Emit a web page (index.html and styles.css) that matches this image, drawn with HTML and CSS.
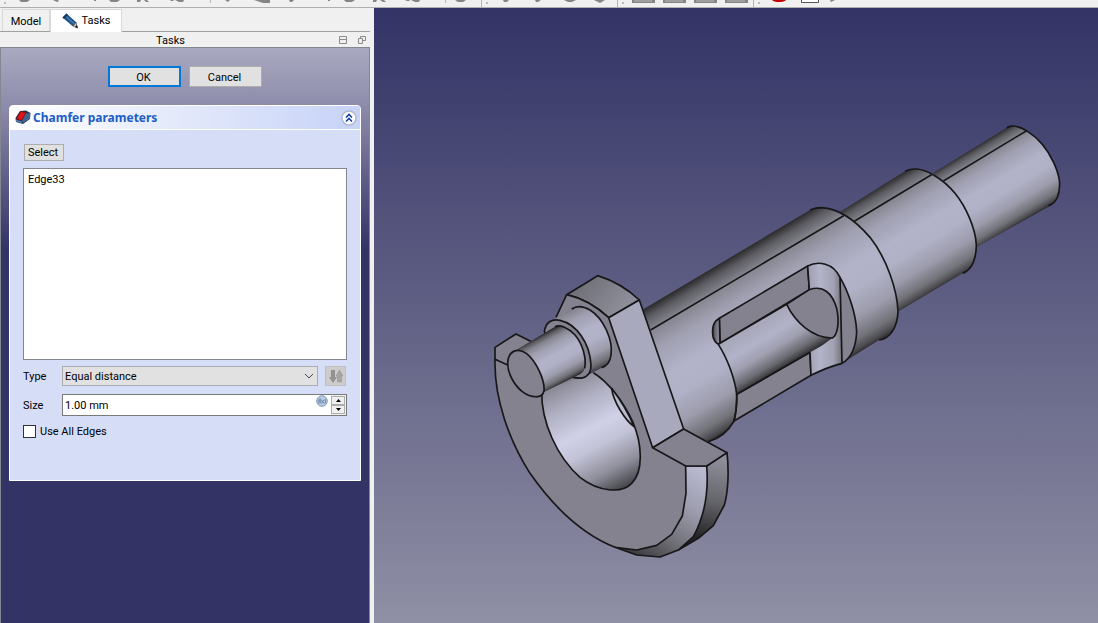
FILE: index.html
```html
<!DOCTYPE html>
<html lang="en">
<head>
<meta charset="utf-8">
<title>Chamfer parameters</title>
<link rel="stylesheet" href="styles.css">
</head>
<body>
<div class="app">
  <header class="toolbar" aria-label="Toolbar">
    <svg class="toolbar-art" viewBox="0 0 1098 7" preserveAspectRatio="xMinYMin slice" aria-hidden="true">
      <g fill="#858585">
        <path d="M19 0h11l-3 2h-6zM53 0h5l1 1-2 1zM96 0v1h-2V0zM109 0h11l-3 2h-6zM137 0h4l-1 2h-3zM144 0h3l2 2h-3zM170 0h4l-1 1h-2zM175 0h9l-1 2h-4zM225 0h5l-2 2zM254 0h16v3h-7zM289 0h5l-2 2h-2zM330 0v1h-2V0zM344 0h11l-3 2h-6zM373 0h4l-1 2h-3zM380 0h4l2 2h-3zM405 0h5l-1 1h-2zM411 0h9l-1 2h-4zM455 0h11l-3 2h-5zM503 0h6l-2 2h-3zM535 0h6l-3 2h-2zM564 0h12l-4 2h-4zM594 0h11l-5 3z"/>
        <path d="M632 0h23v3h-23zM663 0h23v3h-23zM694 0h23v3h-23zM725 0h23v3h-23z"/>
        <path d="M830 0h5l-4 2z"/>
      </g>
      <path d="M634 1h18M665 1h18M696 1h18M727 1h18" stroke="#b9b9b9"/>
      <path d="M772 0h14q-2 2-7 2t-7-2z" fill="#c40000"/>
      <path d="M801.500 0v2.500h17V0" fill="#fff" stroke="#555"/>
      <path d="M210.500 0v3M445.500 0v3M481.500 0v7M617.500 0v7M753.500 0v7" stroke="#b4b4b4"/>
      <path d="M4 2h2v2H4zM486 2h2v2h-2zM622 2h2v2h-2zM758 2h2v2h-2z" fill="#bdbdbd"/>
    </svg>
  </header>
  <div class="workspace">
    <aside class="dock">
      <nav class="tabs" role="tablist">
        <button class="tab" role="tab" aria-selected="false">Model</button>
        <button class="tab tab-active" role="tab" aria-selected="true">
          <svg class="pencil" viewBox="0 0 16 16" aria-hidden="true">
            <path d="M.5 4.500 4.500.5 14.500 9.500 11 13.500z" fill="#245487"/>
            <path d="M3.500 3 12.500 11" stroke="#4580b5" stroke-width="1.300"/>
            <path d="M.5 4.500 4.500.5l1.500 1.500L2 6z" fill="#173a60"/>
            <path d="M11 13 14 9.500 15.500 15z" fill="#c9c5bb" stroke="#333" stroke-width=".6"/>
            <path d="m13 14 2-2 .7 3.300z" fill="#111"/>
          </svg>
          Tasks
        </button>
      </nav>
      <div class="dock-title">
        <span class="dock-name">Tasks</span>
        <button class="dock-btn" aria-label="Shade"><svg viewBox="0 0 10 10"><path d="M1.500 1.500h7v7h-7zM1 4.500h8" fill="none" stroke="#8b8b8b"/></svg></button>
        <button class="dock-btn" aria-label="Float"><svg viewBox="0 0 10 10"><path d="M3.500 3V1.500h5v4H6M1.500 3.500h4v5h-4z" fill="none" stroke="#8b8b8b"/></svg></button>
      </div>
      <div class="task-view">
        <div class="actions">
          <button class="btn btn-default">OK</button>
          <button class="btn">Cancel</button>
        </div>
        <section class="card">
          <div class="card-head">
            <svg class="chamfer-icon" viewBox="0 0 16 15" aria-hidden="true">
              <path d="M5 1 11 .5 15.500 3 15 9 8 14 1 12 .5 8z" fill="#1d3656"/>
              <path d="m10 3.500 5-.5v5.500L8.500 13 6 9.500z" fill="#3d6590"/>
              <path d="M.8 9.500 7 11.500v1.800L1 11.500z" fill="#4f7fb0"/>
              <path d="M5.500 1.500 11 2.500 6.500 10.500 1.500 9z" fill="#e21414" stroke="#7c0c12" stroke-width=".8"/>
            </svg>
            <h1 class="card-title">Chamfer parameters</h1>
            <button class="collapse" aria-label="Collapse">
              <svg viewBox="0 0 16 16"><circle cx="8" cy="8" r="7" fill="#fff" stroke="#b1b8d3" stroke-width="1.500"/><path d="M5 7.500 8 4.500l3 3M5 11.500l3-3 3 3" fill="none" stroke="#1740a0" stroke-width="1.600"/></svg>
            </button>
          </div>
          <div class="card-body">
            <button class="btn-select">Select</button>
            <ul class="edge-list"><li>Edge33</li></ul>
            <div class="row row-type">
              <label for="type">Type</label>
              <div class="combo">
                <select id="type"><option>Equal distance</option></select>
                <svg class="chevron" viewBox="0 0 10 6"><path d="m1 1 4 4 4-4" fill="none" stroke="#444"/></svg>
              </div>
              <button class="flip" aria-label="Flip direction" disabled>
                <svg viewBox="0 0 16 15"><path d="M3 1h4v7h2l-4 6-4-6h2z" fill="#929292"/><path d="M9.500 13V7H8l3.500-6L15 7h-1.500v6z" fill="#a5a5a5" stroke="#979797" stroke-width=".6"/></svg>
              </button>
            </div>
            <div class="row row-size">
              <label for="size">Size</label>
              <div class="spin">
                <input id="size" type="text" value="1.00 mm">
                <svg class="fx" viewBox="0 0 12 12" aria-hidden="true"><circle cx="6" cy="6" r="5.300" fill="#b9cbe0" stroke="#7f9dbc"/><path d="M3 9V5q0-1.500 1.500-1.500M2 6h2M5 4q-1 2 0 4.500M5.500 5l2.500 3.500M8 5l-2.500 3.500M9 4q1 2 0 4.500" fill="none" stroke="#6686a8" stroke-width=".9"/></svg>
                <span class="steps">
                  <button aria-label="Increase"><svg viewBox="0 0 5 3"><path d="M0 3 2.500 0 5 3z"/></svg></button>
                  <button aria-label="Decrease"><svg viewBox="0 0 5 3"><path d="M0 0 2.500 3 5 0z"/></svg></button>
                </span>
              </div>
            </div>
            <label class="check"><input type="checkbox"><span>Use All Edges</span></label>
          </div>
        </section>
      </div>
    </aside>
    <main class="viewport">
      <svg class="model" viewBox="1122 24 2172 1845" preserveAspectRatio="xMidYMid meet" role="img" aria-label="Shaft part">
        <defs>
          <linearGradient id="shade">
            <stop offset="0" stop-color="#2c2c2e"/><stop offset=".06" stop-color="#5c5c62"/><stop offset=".15" stop-color="#878792"/><stop offset=".28" stop-color="#a1a1b3"/><stop offset=".46" stop-color="#b2b2c9"/><stop offset=".62" stop-color="#b0b0c6"/><stop offset=".78" stop-color="#9c9cac"/><stop offset=".91" stop-color="#727279"/><stop offset=".97" stop-color="#4b4b50"/><stop offset="1" stop-color="#2d2d2f"/>
          </linearGradient>
          <linearGradient id="c3" href="#shade" gradientUnits="userSpaceOnUse" x1="560" y1="53" x2="697" y2="282"/>
          <linearGradient id="c2" href="#shade" gradientUnits="userSpaceOnUse" x1="255" y1="184" x2="437" y2="488"/>
          <linearGradient id="c1" href="#shade" gradientUnits="userSpaceOnUse" x1="510" y1="60" x2="738" y2="441"/>
          <linearGradient id="inner" gradientUnits="userSpaceOnUse" x1="235" y1="463" x2="317" y2="600">
            <stop offset="0" stop-color="#a6a6b8"/><stop offset=".35" stop-color="#b2b2c9"/><stop offset=".6" stop-color="#a0a0b1"/><stop offset=".85" stop-color="#6b6b73"/><stop offset="1" stop-color="#333336"/>
          </linearGradient>
          <linearGradient id="endwall" gradientUnits="userSpaceOnUse" x1="503" y1="0" x2="606" y2="0">
            <stop offset="0" stop-color="#9d9dae"/><stop offset=".35" stop-color="#b3b3ca"/><stop offset=".75" stop-color="#a2a2b4"/><stop offset="1" stop-color="#73737c"/>
          </linearGradient>
          <linearGradient id="nook" gradientUnits="userSpaceOnUse" x1="217" y1="0" x2="241" y2="0">
            <stop offset="0" stop-color="#444448"/><stop offset="1" stop-color="#a0a0b0"/>
          </linearGradient>
          <linearGradient id="cap" gradientUnits="userSpaceOnUse" x1="310" y1="60" x2="420" y2="150">
            <stop offset="0" stop-color="#707078"/><stop offset="1" stop-color="#8d8d99"/>
          </linearGradient>
          <linearGradient id="bore" gradientUnits="userSpaceOnUse" x1="270" y1="365" x2="440" y2="690">
            <stop offset="0" stop-color="#8d8d9a"/><stop offset=".18" stop-color="#b0b0c3"/><stop offset=".42" stop-color="#d0d0e7"/><stop offset=".58" stop-color="#c2c2d7"/><stop offset=".8" stop-color="#8d8d9a"/><stop offset="1" stop-color="#3a3a3d"/>
          </linearGradient>
          <linearGradient id="pin" href="#shade" gradientUnits="userSpaceOnUse" x1="115" y1="262" x2="189" y2="400"/>
          <linearGradient id="boss" href="#shade" gradientUnits="userSpaceOnUse" x1="255" y1="125" x2="358" y2="330"/>
          <linearGradient id="bevel" gradientUnits="userSpaceOnUse" x1="650" y1="618" x2="480" y2="890">
            <stop offset="0" stop-color="#b9b9d0"/><stop offset=".35" stop-color="#9e9eb0"/><stop offset=".7" stop-color="#73737b"/><stop offset="1" stop-color="#3e3e42"/>
          </linearGradient>
          <linearGradient id="rim" gradientUnits="userSpaceOnUse" x1="715" y1="600" x2="665" y2="840">
            <stop offset="0" stop-color="#8d8d99"/><stop offset=".5" stop-color="#65656c"/><stop offset="1" stop-color="#222224"/>
          </linearGradient>
        </defs>
        <g class="ink" transform="translate(2460 330)">
          <path class="bare" fill="url(#c3)" d="M340 188 560 53 580 48 600 51 620 62 650 85 680 118 705 165 718 210V240L710 265 698 282 685 290 469 412z"/>
          <path d="M560 53Q572 47 580 48C605 49 640 72 667 103 695 136 714 182 718 210 722 250 710 280 685 287M370 213 620 62"/>
          <path class="bare" fill="url(#c2)" d="M60 305 255 184 285 177 310 180 338 192 370 213 405 250 435 295 458 350 469 405 465 440 455 465 440 484 428 490 236 604z"/>
          <path d="M255 184Q272 176 290 177C320 179 370 206 405 250 440 293 467 358 469 405 468 452 452 481 428 490M103 334 338 192"/>
        </g>
        <g class="ink" transform="translate(1920 570)">
          <path class="bare" fill="url(#c1)" d="M10 358 510 60 545 53 575 60 611 77 643 95 680 130 720 185 750 245 770 310 774 365 768 400 755 425 735 443 717 450 606 520Q560 532 513 556L282 693C265 720 240 745 205 755L130 716 0 330z"/>
          <path d="M510 60Q528 53 545 53C600 55 650 96 690 142 740 205 772 300 774 365 772 412 750 446 717 450M32 420 611 77"/>
          <path class="face" d="M238 385 503 228 508 299 240 460z"/>
          <path fill="url(#nook)" d="M238 385C222 394 215 415 219 440Q223 455 235 463L240 460z"/>
          <path class="face" d="M290 613 510 487 513 556 282 693Q292 655 290 613z"/>
          <path class="bare" fill="url(#endwall)" d="M503 228C535 211 580 220 600 262L606 520Q560 532 513 556L510 487Q540 473 577 444L585 400 580 320 508 299z"/>
          <path d="M508 299 503 228C535 211 580 220 600 262M606 520Q560 532 513 556L510 487"/>
          <path class="face" d="M600 262C625 305 648 370 650 425 648 470 635 503 606 520z"/>
          <path class="bare" fill="url(#inner)" d="M235 463 440 343C465 390 515 440 577 444Q545 470 510 487L290 613C286 570 260 500 235 463z"/>
          <path class="face" d="M440 343 508 299C550 284 577 310 590 355 599 395 593 435 577 444 515 443 465 395 440 343z"/>
          <path d="M235 463 440 343M290 613 510 487M235 463C265 510 285 570 290 613Q291 660 282 693C265 723 240 745 205 755"/>
        </g>
        <g class="ink" transform="translate(1440 780)">
          <path fill="url(#cap)" d="M260 104 353 47C398 61 440 84 478 120L386 173C350 140 310 115 260 104z"/>
          <path fill="url(#rim)" d="M680 618 741 578C747 630 745 695 733 735L700 797 655 835 595 870 500 860z"/>
          <path class="face" d="M45 262 108 222 170 253 100 330 45 298z"/>
          <path class="face bare" d="M45 298 83 315 200 300 228 172 260 104C310 115 350 140 386 173L518 563 617 618 618 700 607 768 575 823 530 856 470 870 405 862C230 790 42 560 45 298z"/>
          <path d="M83 315 45 298C42 420 90 545 150 640 220 740 300 820 405 862M228 172 260 104"/>
          <path fill="url(#bevel)" d="M617 618H680C686 690 678 760 640 830L595 870 540 891 470 885 405 862 470 870 530 856 575 823 607 768 618 700z"/>
          <path d="M260 104C310 115 350 140 386 173"/>
          <path fill="#a9a9be" d="M386 173 478 120 611 507 518 563z"/>
          <path class="face" d="M518 563 611 507 741 578 680 618H617z"/>
          <path class="bare" fill="url(#bore)" d="M185 395C184 485 230 590 300 652 355 695 425 702 455 670 490 635 488 555 458 485 430 425 385 365 340 338z"/>
          <path d="M185 395C184 485 230 590 300 652 355 695 425 702 455 670 490 635 488 555 458 485 430 425 385 365 340 338"/>
          <path fill="#b9b9ce" d="M395 385C400 425 435 480 462 500 444 455 425 425 395 385z"/>
          <path class="bare" fill="url(#boss)" d="M232 175 275 148C290 138 310 138 330 150 370 175 400 240 393 285 390 310 375 320 365 323L300 357z"/>
          <path d="M275 147C290 137 310 138 330 150 370 175 400 240 393 285 390 310 375 320 365 323"/>
          <path class="face" d="M193 215C197 187 215 175 240 181 290 192 330 250 333 315 333 350 310 362 272 350z"/>
          <path class="bare" fill="url(#pin)" d="M105 272 225 200C240 193 265 203 285 225 305 250 320 290 314 325 312 335 305 340 300 343L188 398z"/>
          <path d="M225 200C240 193 265 203 285 225 308 252 320 295 314 325"/>
          <path class="face" d="M83 310C84 270 115 262 140 281 168 303 195 360 192 392 188 418 152 414 127 395 102 375 83 340 83 310z"/>
        </g>
      </svg>
    </main>
  </div>
</div>
</body>
</html>
```
FILE: styles.css
```css
* { box-sizing: border-box; }
body { margin: 0; font: 11px/14px Roboto, "Noto Sans", sans-serif; color: #000; }
button, input, select { font: inherit; color: inherit; }
button { padding: 0; border: 0; background: none; }
svg { display: block; }

.app { display: flex; flex-direction: column; height: 100vh; overflow: hidden; background: #f0f0f0; }
.toolbar { height: 8px; flex: none; border-bottom: 1px solid #b0b0b0; overflow: hidden; }
.toolbar-art { width: 1098px; height: 7px; }
.workspace { flex: 1; display: flex; gap: 4px; min-height: 0; }

.dock { width: 370px; flex: none; display: flex; flex-direction: column; }
.tabs { display: flex; align-items: flex-end; height: 24px; padding-left: 2px; border-bottom: 1px solid #a0a0a0; }
.tab { height: 22px; width: 48px; padding-top: 2px; border: 1px solid #d9d9d9; border-bottom: 0; background: #f0f0f0; }
.tab-active { display: flex; align-items: center; justify-content: center; gap: 4px; width: 72px; height: 23px; margin-bottom: -1px; padding: 0; background: #fff; }
.pencil { width: 16px; height: 16px; }
.dock-title { display: flex; align-items: center; height: 15px; gap: 9px; padding-right: 3px; }
.dock-name { flex: 1; text-align: center; padding: 2px 0 0 12px; }
.dock-btn svg { width: 10px; height: 10px; }

.task-view { flex: 1; padding: 18px 8px; border: 1px solid #828790; border-bottom: 0; background: linear-gradient(#a9a9c0, #8c8aaa 60px, #333366 200px); }
.actions { display: flex; justify-content: center; gap: 8px; margin-bottom: 18px; }
.btn { width: 73px; height: 21px; padding: 2px 2px 0 0; border: 1px solid #adadad; background: #e1e1e1; }
.btn-default { border: 2px solid #0078d7; }

.card { border: 1px solid #fff; border-radius: 4px 4px 0 0; background: #d6ddf7; overflow: hidden; }
.card-head { display: flex; align-items: center; gap: 2px; height: 24px; padding: 0 3px 0 5px; border-bottom: 1px solid #fff; background: linear-gradient(90deg, #fff, #c6d2f7); }
.chamfer-icon { width: 16px; height: 15px; }
.card-title { flex: 1; margin: 0; font-family: "Noto Sans", sans-serif; font-size: 12px; font-weight: bold; color: #215dc6; }
.collapse svg { width: 16px; height: 16px; }
.card-body { padding: 14px 13px 42px; }
.btn-select { display: block; width: 40px; height: 17px; margin-left: 1px; padding: 1px 2px 0 0; border: 1px solid #adadad; background: #e1e1e1; line-height: 14px; }
.edge-list { height: 192px; margin: 7px 0 6px; padding: 4px; list-style: none; border: 1px solid #828790; background: #fff; }
.row { display: flex; align-items: center; }
.row label { width: 39px; padding-top: 2px; }
.combo { position: relative; flex: 1; }
.combo select { display: block; width: 100%; height: 20px; padding: 2px 2px 0; border: 1px solid #adadad; border-radius: 0; background: #e1e1e1; appearance: none; }
.chevron { position: absolute; right: 4px; top: 7px; width: 10px; height: 6px; }
.flip { display: grid; place-items: center; width: 21px; height: 20px; margin-left: 7px; margin-right: 1px; border: 1px solid #c0c0c0; background: #cccccc; }
.flip svg { width: 16px; height: 15px; }
.row-size { margin-top: 8px; }
.spin { display: flex; flex: 1; height: 22px; border: 1px solid #7a7a7a; background: #fff; }
.spin input { flex: 1; min-width: 0; padding: 2px 2px 0; border: 0; background: none; outline: 0; }
.fx { width: 12px; height: 12px; margin-right: 3px; }
.steps { display: flex; flex-direction: column; width: 15px; padding: 1px 1px 1px 0; background: #f0f0f0; }
.steps button { flex: 1; display: grid; place-items: center; border: 1px solid #adadad; background: #f0f0f0; }
.steps svg { width: 5px; height: 3px; }
.check { display: flex; align-items: center; gap: 4px; height: 14px; margin-top: 8px; }
.check span { padding-top: 2px; }
.check input { appearance: none; width: 13px; height: 13px; margin: 0; border: 1px solid #333; background: #fff; }

.viewport { flex: 1; min-width: 0; background: linear-gradient(#333366, #8f8fa5); }
.model { width: 100%; height: 100%; }
.ink path { fill: none; stroke: #171719; stroke-width: 5; stroke-linejoin: round; }
.ink path[fill] { fill: revert-layer; }
.ink .bare { stroke: none; }
.ink .face { fill: #84828f; }
```
